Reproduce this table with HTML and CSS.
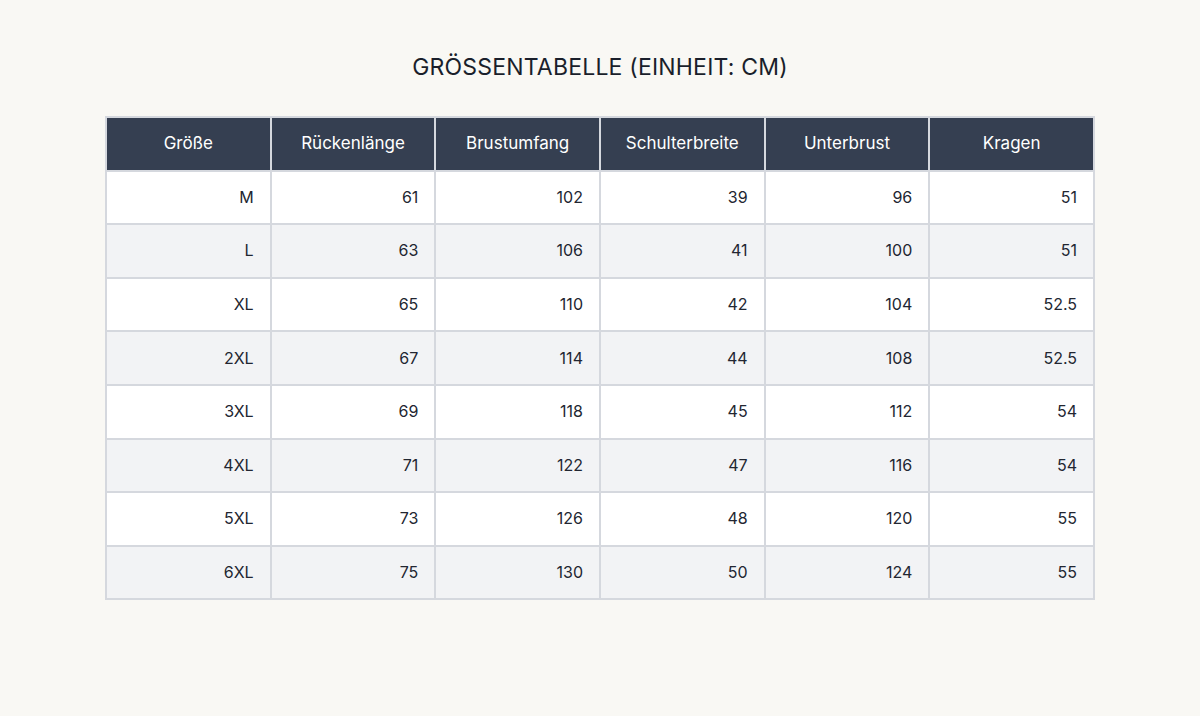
FILE: index.html
```html
<!DOCTYPE html>
<html lang="de">
<head>
<meta charset="utf-8">
<link rel="stylesheet" href="styles.css">
</head>
<body>
<main class="page">
  <h1 class="title">GRÖSSENTABELLE (EINHEIT: CM)</h1>
  <table class="size-table">
    <thead>
      <tr><th>Größe</th><th>Rückenlänge</th><th>Brustumfang</th><th>Schulterbreite</th><th>Unterbrust</th><th>Kragen</th></tr>
    </thead>
    <tbody>
      <tr><td>M</td><td>61</td><td>102</td><td>39</td><td>96</td><td>51</td></tr>
      <tr><td>L</td><td>63</td><td>106</td><td>41</td><td>100</td><td>51</td></tr>
      <tr><td>XL</td><td>65</td><td>110</td><td>42</td><td>104</td><td>52.5</td></tr>
      <tr><td>2XL</td><td>67</td><td>114</td><td>44</td><td>108</td><td>52.5</td></tr>
      <tr><td>3XL</td><td>69</td><td>118</td><td>45</td><td>112</td><td>54</td></tr>
      <tr><td>4XL</td><td>71</td><td>122</td><td>47</td><td>116</td><td>54</td></tr>
      <tr><td>5XL</td><td>73</td><td>126</td><td>48</td><td>120</td><td>55</td></tr>
      <tr><td>6XL</td><td>75</td><td>130</td><td>50</td><td>124</td><td>55</td></tr>
    </tbody>
  </table>
</main>
</body>
</html>
```
FILE: styles.css
```css
html, body {
  margin: 0;
  padding: 0;
  background: #f9f8f4;
}
body {
  font-family: "Inter", "Liberation Sans", sans-serif;
  color: #1f2430;
}
.page {
  width: 1200px;
  height: 716px;
  display: flex;
  flex-direction: column;
  align-items: center;
  padding-top: 50px;
  box-sizing: border-box;
}
.title {
  margin: 0 0 32px;
  font-size: 23px;
  font-weight: 400;
  line-height: 34px;
  letter-spacing: 0.2px;
  color: #1a1f2b;
}
.size-table {
  width: 990px;
  border-collapse: collapse;
  table-layout: fixed;
  border: 2px solid #d5d8de;
}
.size-table th,
.size-table td {
  border: 2px solid #d5d8de;
  height: 53.6px;
  padding: 0 16px;
  box-sizing: border-box;
}
.size-table th {
  background: #353f51;
  color: #ffffff;
  font-weight: 400;
  font-size: 17px;
  text-align: center;
  padding-bottom: 2px;
}
.size-table td {
  text-align: right;
  font-size: 16px;
  color: #222631;
  padding-bottom: 1px;
}
.size-table tbody tr:nth-child(odd) td { background: #ffffff; }
.size-table tbody tr:nth-child(even) td { background: #f2f3f5; }
```
